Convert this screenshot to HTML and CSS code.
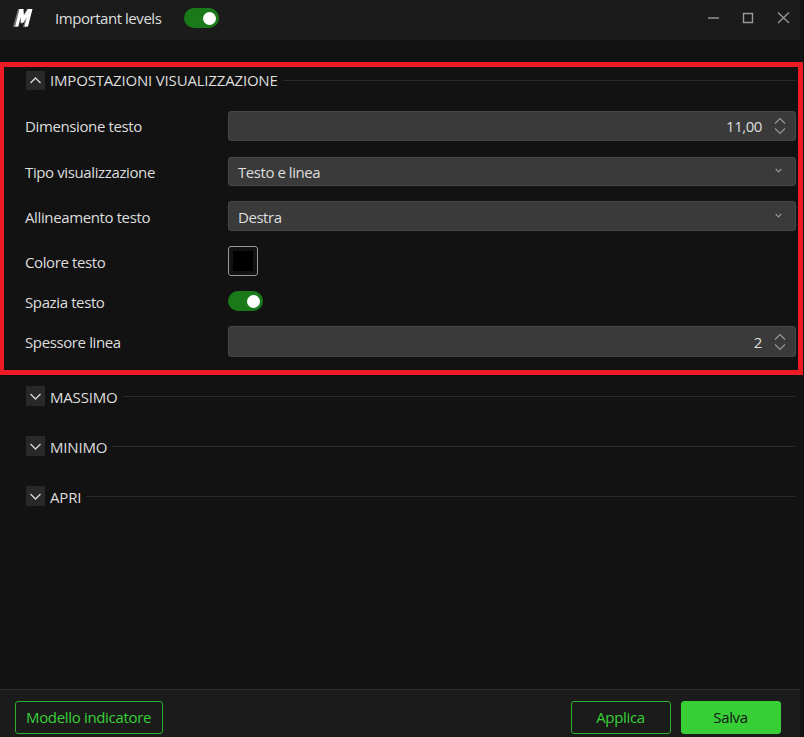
FILE: index.html
```html
<!DOCTYPE html>
<html lang="it">
<head>
    <meta charset="UTF-8">
    <meta name="viewport" content="width=device-width, initial-scale=1.0">
    <title>Important levels</title>
    <link rel="stylesheet" href="styles.css">
</head>
<body>

    <div class="window">
        <div class="titlebar">
            <svg class="logo" width="20" height="20" viewBox="0 0 20 20">
                <path d="M5 1h4.600l.8 6L14 1h5l-4.600 18H10L12.400 10 9 15.500H7.400L6.600 10 4.600 19H0z" fill="#777"/>
                <path d="M6.500 1h4l.4 6.500L15 1h4.500L15 18.500h-3.600l2.400-9L10 15H8.400L7.600 9 5.400 18.500H2.200z" fill="#fff"/>
            </svg>
            <span class="title">Important levels</span>
            <div class="toggle"></div>
            <svg class="controls" width="84" height="14" viewBox="0 0 84 14">
                <path d="M0 7h11" stroke="#999" stroke-width="1.400" fill="none"/>
                <path d="M35.500 2.500h9v9h-9z" stroke="#999" stroke-width="1.400" fill="none"/>
                <path d="M70 1.500l11 10.500M81 1.500L70 12" stroke="#999" stroke-width="1.300" fill="none"/>
            </svg>
        </div>

        <div class="content">
            <div class="highlight">
                <div class="group open">
                    <div class="expander"><svg width="19" height="19"><path d="M4.500 12L9.500 7l5 5"/></svg></div>
                    <span class="group-title">IMPOSTAZIONI VISUALIZZAZIONE</span>
                    <div class="rule"></div>
                </div>

                <div class="settings">
                    <div class="row tall first">
                        <label>Dimensione testo</label>
                        <div class="field number"><span>11,00</span>
                            <svg class="spin" width="12" height="18"><path d="M1 6.500L6 1.500l5 5M1 11.500l5 5 5-5"/></svg>
                        </div>
                    </div>
                    <div class="row short">
                        <label>Tipo visualizzazione</label>
                        <div class="field select"><span>Testo e linea</span>
                            <svg class="arrow" width="7" height="6"><path d="M.7 1l2.800 3 2.800-3"/></svg>
                        </div>
                    </div>
                    <div class="row low">
                        <label>Allineamento testo</label>
                        <div class="field select"><span>Destra</span>
                            <svg class="arrow" width="7" height="6"><path d="M.7 1l2.800 3 2.800-3"/></svg>
                        </div>
                    </div>
                    <div class="row low">
                        <label>Colore testo</label>
                        <div class="swatch"><div class="color"></div></div>
                    </div>
                    <div class="row small">
                        <label>Spazia testo</label>
                        <div class="toggle"></div>
                    </div>
                    <div class="row tall">
                        <label>Spessore linea</label>
                        <div class="field number last"><span>2</span>
                            <svg class="spin" width="12" height="18"><path d="M1 6.500L6 1.500l5 5M1 11.500l5 5 5-5"/></svg>
                        </div>
                    </div>
                </div>
            </div>

            <div class="groups">
                <div class="group">
                    <div class="expander"><svg width="19" height="20"><path d="M4.500 8l5 5 5-5"/></svg></div>
                    <span class="group-title">MASSIMO</span>
                    <div class="rule"></div>
                </div>
                <div class="group">
                    <div class="expander"><svg width="19" height="20"><path d="M4.500 8l5 5 5-5"/></svg></div>
                    <span class="group-title">MINIMO</span>
                    <div class="rule"></div>
                </div>
                <div class="group">
                    <div class="expander"><svg width="19" height="20"><path d="M4.500 8l5 5 5-5"/></svg></div>
                    <span class="group-title">APRI</span>
                    <div class="rule"></div>
                </div>
            </div>
        </div>

        <div class="footer">
            <button class="template">Modello indicatore</button>
            <button class="apply">Applica</button>
            <button class="save">Salva</button>
        </div>
    </div>

</body>
</html>
```
FILE: styles.css
```css
* {
    box-sizing: border-box;
}
body {
    margin: 0;
    height: 737px;
    background-color: #121212;
    color: #dedede;
    font-family: "Open Sans", "Noto Sans", sans-serif;
    font-size: 15px;
    line-height: 20px;
    letter-spacing: -0.45px;
    overflow: hidden;
}
svg {
    display: block;
    flex: none;
}
.window {
    display: flex;
    flex-direction: column;
    height: 737px;
}
.titlebar {
    display: flex;
    align-items: center;
    width: 800px;
    height: 40px;
    padding: 0 11px 4px 13px;
    background-color: #1b1b1b;
}
.title {
    width: 129px;
    margin-left: 22px;
    padding-bottom: 1px;
    white-space: nowrap;
}
.controls {
    margin-left: auto;
    margin-right: -3px;
}
.toggle {
    display: flex;
    align-items: center;
    justify-content: flex-end;
    width: 35px;
    height: 20px;
    padding-right: 3px;
    border-radius: 10px;
    background-color: #1a7a1a;
}
.toggle::after {
    content: "";
    width: 13px;
    height: 13px;
    border-radius: 50%;
    background-color: #fff;
}
.content {
    flex: 1;
    padding-top: 22px;
}
.highlight {
    width: 803px;
    height: 313px;
    padding: 4px 2px 0 22px;
    border: 5px solid #ed1c24;
    border-left-width: 4px;
}
.group {
    display: flex;
    align-items: center;
    height: 20px;
}
.group.open {
    height: 19px;
    margin-bottom: 21px;
}
.expander {
    width: 19px;
    height: 20px;
    background-color: #292929;
}
.open .expander {
    height: 19px;
}
.expander path {
    fill: none;
    stroke: #d8d8d8;
    stroke-width: 1.3;
}
.group-title {
    margin: 2px 5px 0;
    letter-spacing: -0.18px;
    white-space: nowrap;
}
.open .group-title {
    margin-top: 0;
    margin-bottom: 2px;
}
.rule {
    flex: 1;
    height: 1px;
    background-color: #2a2a2a;
}
.settings {
    display: flex;
    flex-direction: column;
    gap: 15px;
}
.row {
    display: grid;
    grid-template-columns: 203px 1fr;
    height: 30px;
    margin-left: -1px;
}
.row.tall {
    height: 31px;
}
.row.short {
    height: 29px;
}
.row.small {
    height: 20px;
}
.row label {
    align-self: center;
    letter-spacing: -0.38px;
}
.row.first label {
    padding-bottom: 2px;
}
.row.low label {
    padding-top: 2px;
}
.row.small label {
    margin-top: 1px;
    margin-bottom: -1px;
}
.field {
    display: flex;
    align-items: center;
    justify-content: space-between;
    height: 30px;
    width: 568px;
    padding: 0 10px 0 9px;
    border: 1px solid #484848;
    border-radius: 3px;
    background-color: #3a3a3a;
}
.short .field {
    height: 29px;
}
.low .field span {
    padding-top: 1px;
}
.field.last {
    height: 31px;
}
.number {
    justify-content: flex-end;
    gap: 12px;
    padding-right: 9px;
}
.field path {
    fill: none;
    stroke: #999;
    stroke-width: 1.1;
}
.arrow {
    margin: -1px 3px 0 0;
}
.swatch {
    width: 30px;
    height: 30px;
    padding: 4px;
    border: 1px solid #999;
    border-radius: 3px;
}
.color {
    height: 20px;
    background-color: #000;
}
.groups {
    display: flex;
    flex-direction: column;
    gap: 30px;
    padding: 11px 9px 0 26px;
}
.footer {
    display: flex;
    width: 800px;
    height: 48px;
    padding: 11px 19px 0 15px;
    border-top: 1px solid #2b2b2b;
    background-color: #1b1b1b;
}
button {
    width: 100px;
    height: 33px;
    padding: 0 1px 2px 0;
    border: 1px solid #2fae2c;
    border-radius: 3px;
    background: none;
    color: #38cf36;
    font: inherit;
    letter-spacing: -0.33px;
}
.template {
    width: 148px;
    margin-right: auto;
}
.save {
    margin-left: 10px;
    border-color: #38cf36;
    background-color: #38cf36;
    color: #141414;
}
```
